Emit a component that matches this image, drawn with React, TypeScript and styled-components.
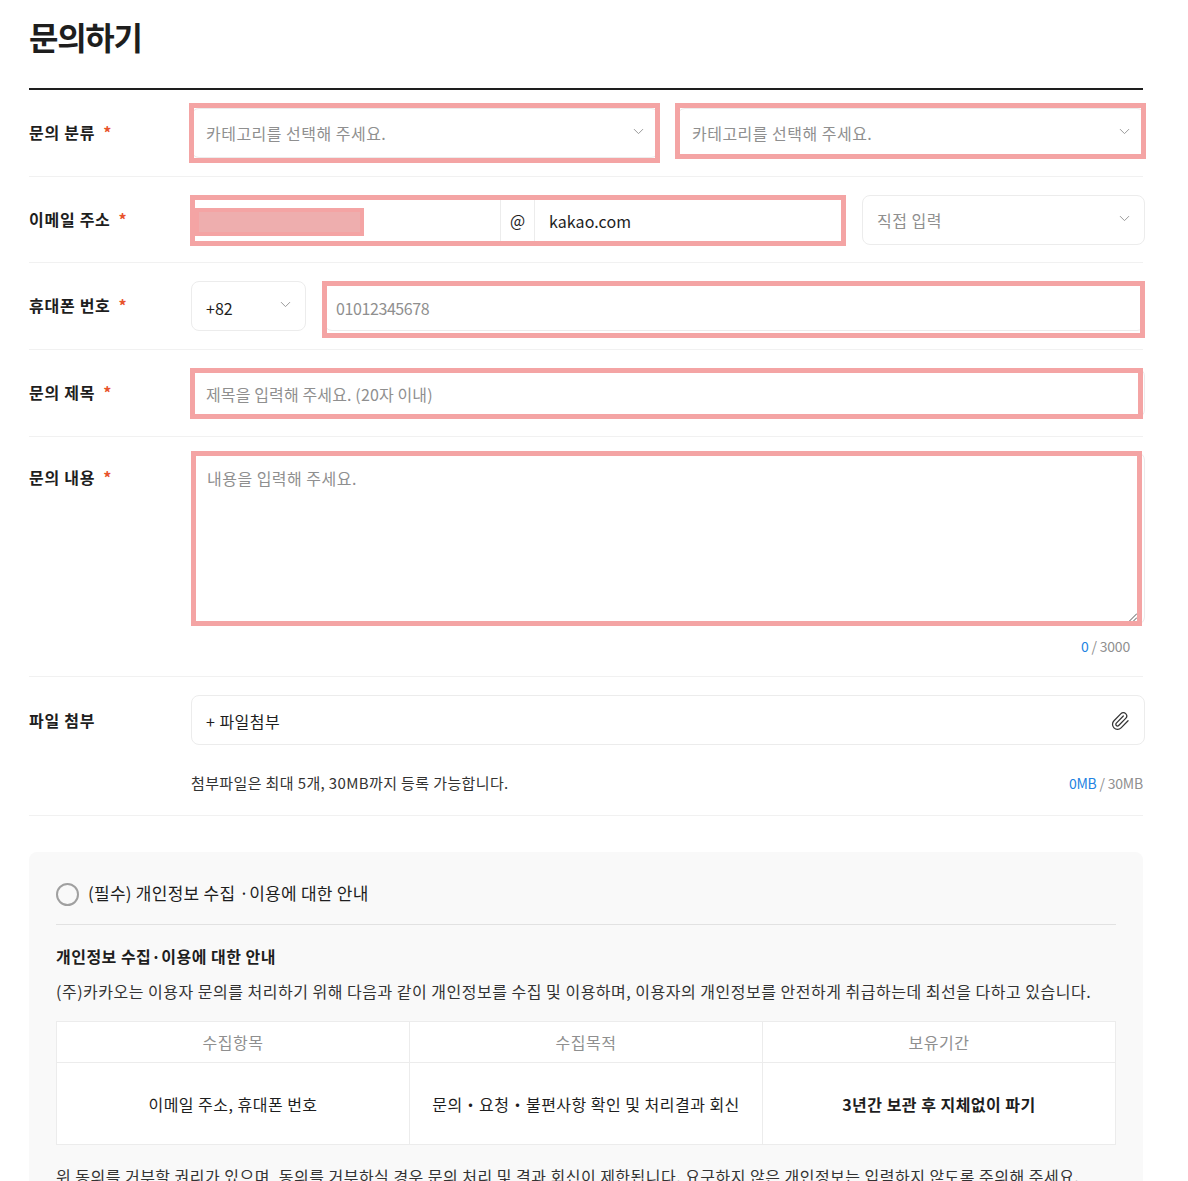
import styled, { createGlobalStyle } from 'styled-components';
import { ChevronDown, Paperclip } from 'lucide-react';

const GlobalStyle = createGlobalStyle`
  html, body {
    margin: 0;
    padding: 0;
    background: #fff;
  }
  body {
    font-family: "Noto Sans CJK KR", "Noto Sans", sans-serif;
    color: #1e1e1e;
    letter-spacing: 0.03em;
  }
  * {
    box-sizing: border-box;
  }
`;

const COLUMNS = [
  { title: '수집항목', value: '이메일 주소, 휴대폰 번호', strong: false },
  { title: '수집목적', value: '문의・요청・불편사항 확인 및 처리결과 회신', strong: false },
  { title: '보유기간', value: '3년간 보관 후 지체없이 파기', strong: true },
];

export default function App() {
  return (
    <Page>
      <GlobalStyle />
      <Title>문의하기</Title>
      <Form>
        <Row>
          <Label>
            문의 분류<Star>*</Star>
          </Label>
          <Fields>
            <Wrap $flex={1}>
              <Select>
                <Placeholder>카테고리를 선택해 주세요.</Placeholder>
                <Chevron />
              </Select>
              <Highlight $top={-5} $left={-2} $right={-1} $bottom={-5} />
            </Wrap>
            <Wrap $flex={1}>
              <Select>
                <Placeholder>카테고리를 선택해 주세요.</Placeholder>
                <Chevron />
              </Select>
              <Highlight $top={-5} $left={-2} $right={-1} $bottom={-1} />
            </Wrap>
          </Fields>
        </Row>

        <Row $pad="18px 0 17px">
          <Label>
            이메일 주소<Star>*</Star>
          </Label>
          <Fields>
            <Wrap $width={653}>
              <EmailGroup>
                <EmailLocal />
                <AtSign>@</AtSign>
                <EmailDomain defaultValue="kakao.com" />
              </EmailGroup>
              <Highlight $top={0} $left={-1} $right={-2} $bottom={-1} />
              <Redacted />
            </Wrap>
            <Wrap $flex={1}>
              <Select>
                <Placeholder>직접 입력</Placeholder>
                <Chevron />
              </Select>
            </Wrap>
          </Fields>
        </Row>

        <Row>
          <Label>
            휴대폰 번호<Star>*</Star>
          </Label>
          <Fields>
            <Wrap $width={115}>
              <Select>
                <Value>+82</Value>
                <Chevron />
              </Select>
            </Wrap>
            <Wrap $flex={1}>
              <PhoneInput placeholder="01012345678" />
              <Highlight $top={0} $left={-2} $right={0} $bottom={-7} />
            </Wrap>
          </Fields>
        </Row>

        <Row>
          <Label>
            문의 제목<Star>*</Star>
          </Label>
          <Fields>
            <Wrap $flex={1}>
              <SubjectInput placeholder="제목을 입력해 주세요. (20자 이내)" />
              <Highlight $top={0} $left={-1} $right={2} $bottom={-1} />
            </Wrap>
          </Fields>
        </Row>

        <Row $align="start" $pad="15px 0 0">
          <Label $top={13}>
            문의 내용<Star>*</Star>
          </Label>
          <ContentColumn>
            <Wrap>
              <TextArea placeholder="내용을 입력해 주세요." />
              <Highlight $top={-1} $left={0} $right={3} $bottom={-1} />
              <ResizeHandle viewBox="0 0 8 8" width="8" height="8">
                <path d="M0.5 8 L8 0.5 M4.5 8 L8 4.5" stroke="#555" strokeWidth="1" fill="none" />
              </ResizeHandle>
            </Wrap>
            <Counter>
              <Blue>0</Blue> / 3000
            </Counter>
          </ContentColumn>
        </Row>

        <Row $align="start" $pad="18px 0 20px">
          <Label $top={13}>파일 첨부</Label>
          <ContentColumn>
            <FileBox>
              <FileLabel>+ 파일첨부</FileLabel>
              <ClipIcon>
                <Paperclip size={20} strokeWidth={1.5} color="#333" />
              </ClipIcon>
            </FileBox>
            <FileInfo>
              <span>첨부파일은 최대 5개, 30MB까지 등록 가능합니다.</span>
              <FileSize>
                <Blue>0MB</Blue> / 30MB
              </FileSize>
            </FileInfo>
          </ContentColumn>
        </Row>
      </Form>

      <Panel>
        <AgreeRow>
          <Radio />
          <span>(필수) 개인정보 수집 ·이용에 대한 안내</span>
        </AgreeRow>
        <PanelTitle>개인정보 수집·이용에 대한 안내</PanelTitle>
        <PanelText>
          (주)카카오는 이용자 문의를 처리하기 위해 다음과 같이 개인정보를 수집 및 이용하며, 이용자의 개인정보를 안전하게
          취급하는데 최선을 다하고 있습니다.
        </PanelText>
        <Table>
          <thead>
            <tr>
              {COLUMNS.map((column) => (
                <Th key={column.title}>{column.title}</Th>
              ))}
            </tr>
          </thead>
          <tbody>
            <tr>
              {COLUMNS.map((column) => (
                <Td key={column.title} $strong={column.strong}>
                  {column.value}
                </Td>
              ))}
            </tr>
          </tbody>
        </Table>
        <PanelFoot>
          위 동의를 거부할 권리가 있으며, 동의를 거부하실 경우 문의 처리 및 결과 회신이 제한됩니다. 요구하지 않은 개인정보는
          입력하지 않도록 주의해 주세요.
        </PanelFoot>
      </Panel>
    </Page>
  );
}

const Chevron = () => (
  <ChevronIcon>
    <ChevronDown size={17} strokeWidth={1.4} color="#999" />
  </ChevronIcon>
);

const Page = styled.div`
  width: 1188px;
  height: 1181px;
  overflow: hidden;
  padding: 0 45px 0 29px;
`;

const Title = styled.h1`
  margin: 0;
  height: 88px;
  padding-top: 12px;
  font-size: 32px;
  line-height: 48px;
  font-weight: 700;
  color: #1e1e1e;
  letter-spacing: -0.04em;
`;

const Form = styled.div`
  border-top: 2px solid #1e1e1e;
`;

const Row = styled.div<{ $align?: string; $pad?: string }>`
  display: flex;
  align-items: ${(p) => p.$align ?? 'center'};
  padding: ${(p) => p.$pad ?? '18px 0 18px'};
  border-bottom: 1px solid #f1f1f1;
`;

const Label = styled.div<{ $top?: number }>`
  flex: 0 0 162px;
  font-size: 16px;
  font-weight: 700;
  color: #1e1e1e;
  letter-spacing: 0.045em;
  margin-top: ${(p) => p.$top ?? -2}px;
`;

const Star = styled.span`
  margin-left: 8px;
  color: #e8532c;
`;

const Fields = styled.div`
  display: flex;
  flex: 0 0 954px;
  gap: 18px;
`;

const ContentColumn = styled.div`
  flex: 0 0 954px;
`;

const Wrap = styled.div<{ $flex?: number; $width?: number }>`
  position: relative;
  flex: ${(p) => (p.$width ? `0 0 ${p.$width}px` : p.$flex ?? 'none')};
  min-width: 0;
`;

const Highlight = styled.div<{ $top: number; $left: number; $right: number; $bottom: number }>`
  position: absolute;
  top: ${(p) => p.$top}px;
  left: ${(p) => p.$left}px;
  right: ${(p) => p.$right}px;
  bottom: ${(p) => p.$bottom}px;
  border: 5px solid #f4a4a4;
  pointer-events: none;
`;

const Redacted = styled.div`
  position: absolute;
  top: 13px;
  left: 4px;
  width: 169px;
  height: 28px;
  background: #eeaeae;
  border: 4px solid #f4a4a4;
`;

const ResizeHandle = styled.svg`
  position: absolute;
  right: 8px;
  bottom: 4px;
`;

const Select = styled.div`
  display: flex;
  align-items: center;
  justify-content: space-between;
  height: 50px;
  padding: 0 11px 0 14px;
  background: #fff;
  border: 1px solid #ececec;
  border-radius: 8px;
  font-size: 16px;
`;

const Placeholder = styled.span`
  color: #8f8f8f;
`;

const Value = styled.span`
  color: #1e1e1e;
  margin-top: 3px;
  letter-spacing: 0;
`;

const ChevronIcon = styled.span`
  display: flex;
  margin-top: -3px;
`;

const ClipIcon = styled.span`
  display: flex;
  margin-top: 1px;
  margin-right: -1px;
`;

const TextInput = styled.input`
  display: block;
  width: 100%;
  height: 50px;
  padding: 2px 14px 0;
  border: 1px solid #ececec;
  border-radius: 8px;
  background: #fff;
  font: inherit;
  font-size: 16px;
  letter-spacing: inherit;
  color: #1e1e1e;
  outline: none;
  &::placeholder {
    color: #8f8f8f;
  }
`;

const PhoneInput = styled(TextInput)`
  padding: 4px 11px 0;
  letter-spacing: -0.025em;
`;

const SubjectInput = styled(TextInput)`
  letter-spacing: 0.008em;
`;

const EmailGroup = styled.div`
  display: flex;
  height: 50px;
  border: 1px solid #ececec;
  border-radius: 8px;
  overflow: hidden;
`;

const EmailLocal = styled.input`
  flex: 0 0 309px;
  min-width: 0;
  border: 0;
  border-right: 1px solid #ececec;
  outline: none;
`;

const AtSign = styled.div`
  flex: 0 0 33px;
  display: flex;
  align-items: center;
  justify-content: center;
  font-size: 16px;
  letter-spacing: 0;
  color: #1e1e1e;
`;

const EmailDomain = styled.input`
  flex: 1;
  min-width: 0;
  padding: 2px 14px 0;
  border: 0;
  border-left: 1px solid #ececec;
  outline: none;
  font: inherit;
  font-size: 16px;
  letter-spacing: 0.005em;
  color: #1e1e1e;
`;

const TextArea = styled.textarea`
  display: block;
  width: 100%;
  height: 173px;
  padding: 13px 15px;
  border: 1px solid #ececec;
  border-radius: 8px;
  background: #fff;
  font: inherit;
  font-size: 16px;
  letter-spacing: inherit;
  outline: none;
  resize: none;
  &::placeholder {
    color: #8f8f8f;
  }
`;

const Counter = styled.div`
  margin-top: 11px;
  padding: 0 15px 20px 0;
  text-align: right;
  font-size: 14px;
  line-height: 20px;
  letter-spacing: -0.015em;
  color: #8f8f8f;
`;

const Blue = styled.span`
  color: #2383e2;
`;

const FileBox = styled.div`
  display: flex;
  align-items: center;
  justify-content: space-between;
  height: 50px;
  padding: 0 15px 0 14px;
  border: 1px solid #ececec;
  border-radius: 8px;
  font-size: 16px;
`;

const FileLabel = styled.span`
  padding-top: 2px;
`;

const FileInfo = styled.div`
  display: flex;
  align-items: center;
  justify-content: space-between;
  margin-top: 26px;
  font-size: 15px;
  line-height: 24px;
  letter-spacing: 0.025em;
  color: #333;
`;

const FileSize = styled.span`
  margin-right: 2px;
  font-size: 14px;
  letter-spacing: -0.015em;
  color: #8f8f8f;
`;

const Panel = styled.div`
  margin-top: 36px;
  padding: 18px 27px 40px;
  background: #f9f9f9;
  border-radius: 8px;
`;

const AgreeRow = styled.div`
  display: flex;
  align-items: center;
  gap: 9px;
  height: 55px;
  padding-bottom: 9px;
  border-bottom: 1px solid #e2e2e2;
  font-size: 17px;
  letter-spacing: 0.015em;
  color: #1e1e1e;
`;

const Radio = styled.span`
  flex: none;
  width: 23px;
  height: 23px;
  margin-top: 3px;
  border: 2px solid #a0a0a0;
  border-radius: 50%;
`;

const PanelTitle = styled.h2`
  margin: 19px 0 0;
  font-size: 16px;
  line-height: 24px;
  font-weight: 700;
  letter-spacing: 0.03em;
`;

const PanelText = styled.p`
  margin: 11px 0 0;
  font-size: 16px;
  line-height: 24px;
  letter-spacing: 0.0315em;
  color: #333;
  white-space: nowrap;
`;

const Table = styled.table`
  width: 100%;
  margin-top: 18px;
  border-collapse: collapse;
  table-layout: fixed;
  background: #fff;
`;

const Th = styled.th`
  height: 41px;
  border: 1px solid #ececec;
  font-size: 16px;
  font-weight: 400;
  color: #8f8f8f;
`;

const Td = styled.td<{ $strong: boolean }>`
  height: 82px;
  border: 1px solid #ececec;
  text-align: center;
  font-size: 16px;
  font-weight: ${(p) => (p.$strong ? 700 : 400)};
  color: #1e1e1e;
`;

const PanelFoot = styled.p`
  margin: 19px 0 0;
  font-size: 16px;
  line-height: 24px;
  color: #333;
  white-space: nowrap;
`;
